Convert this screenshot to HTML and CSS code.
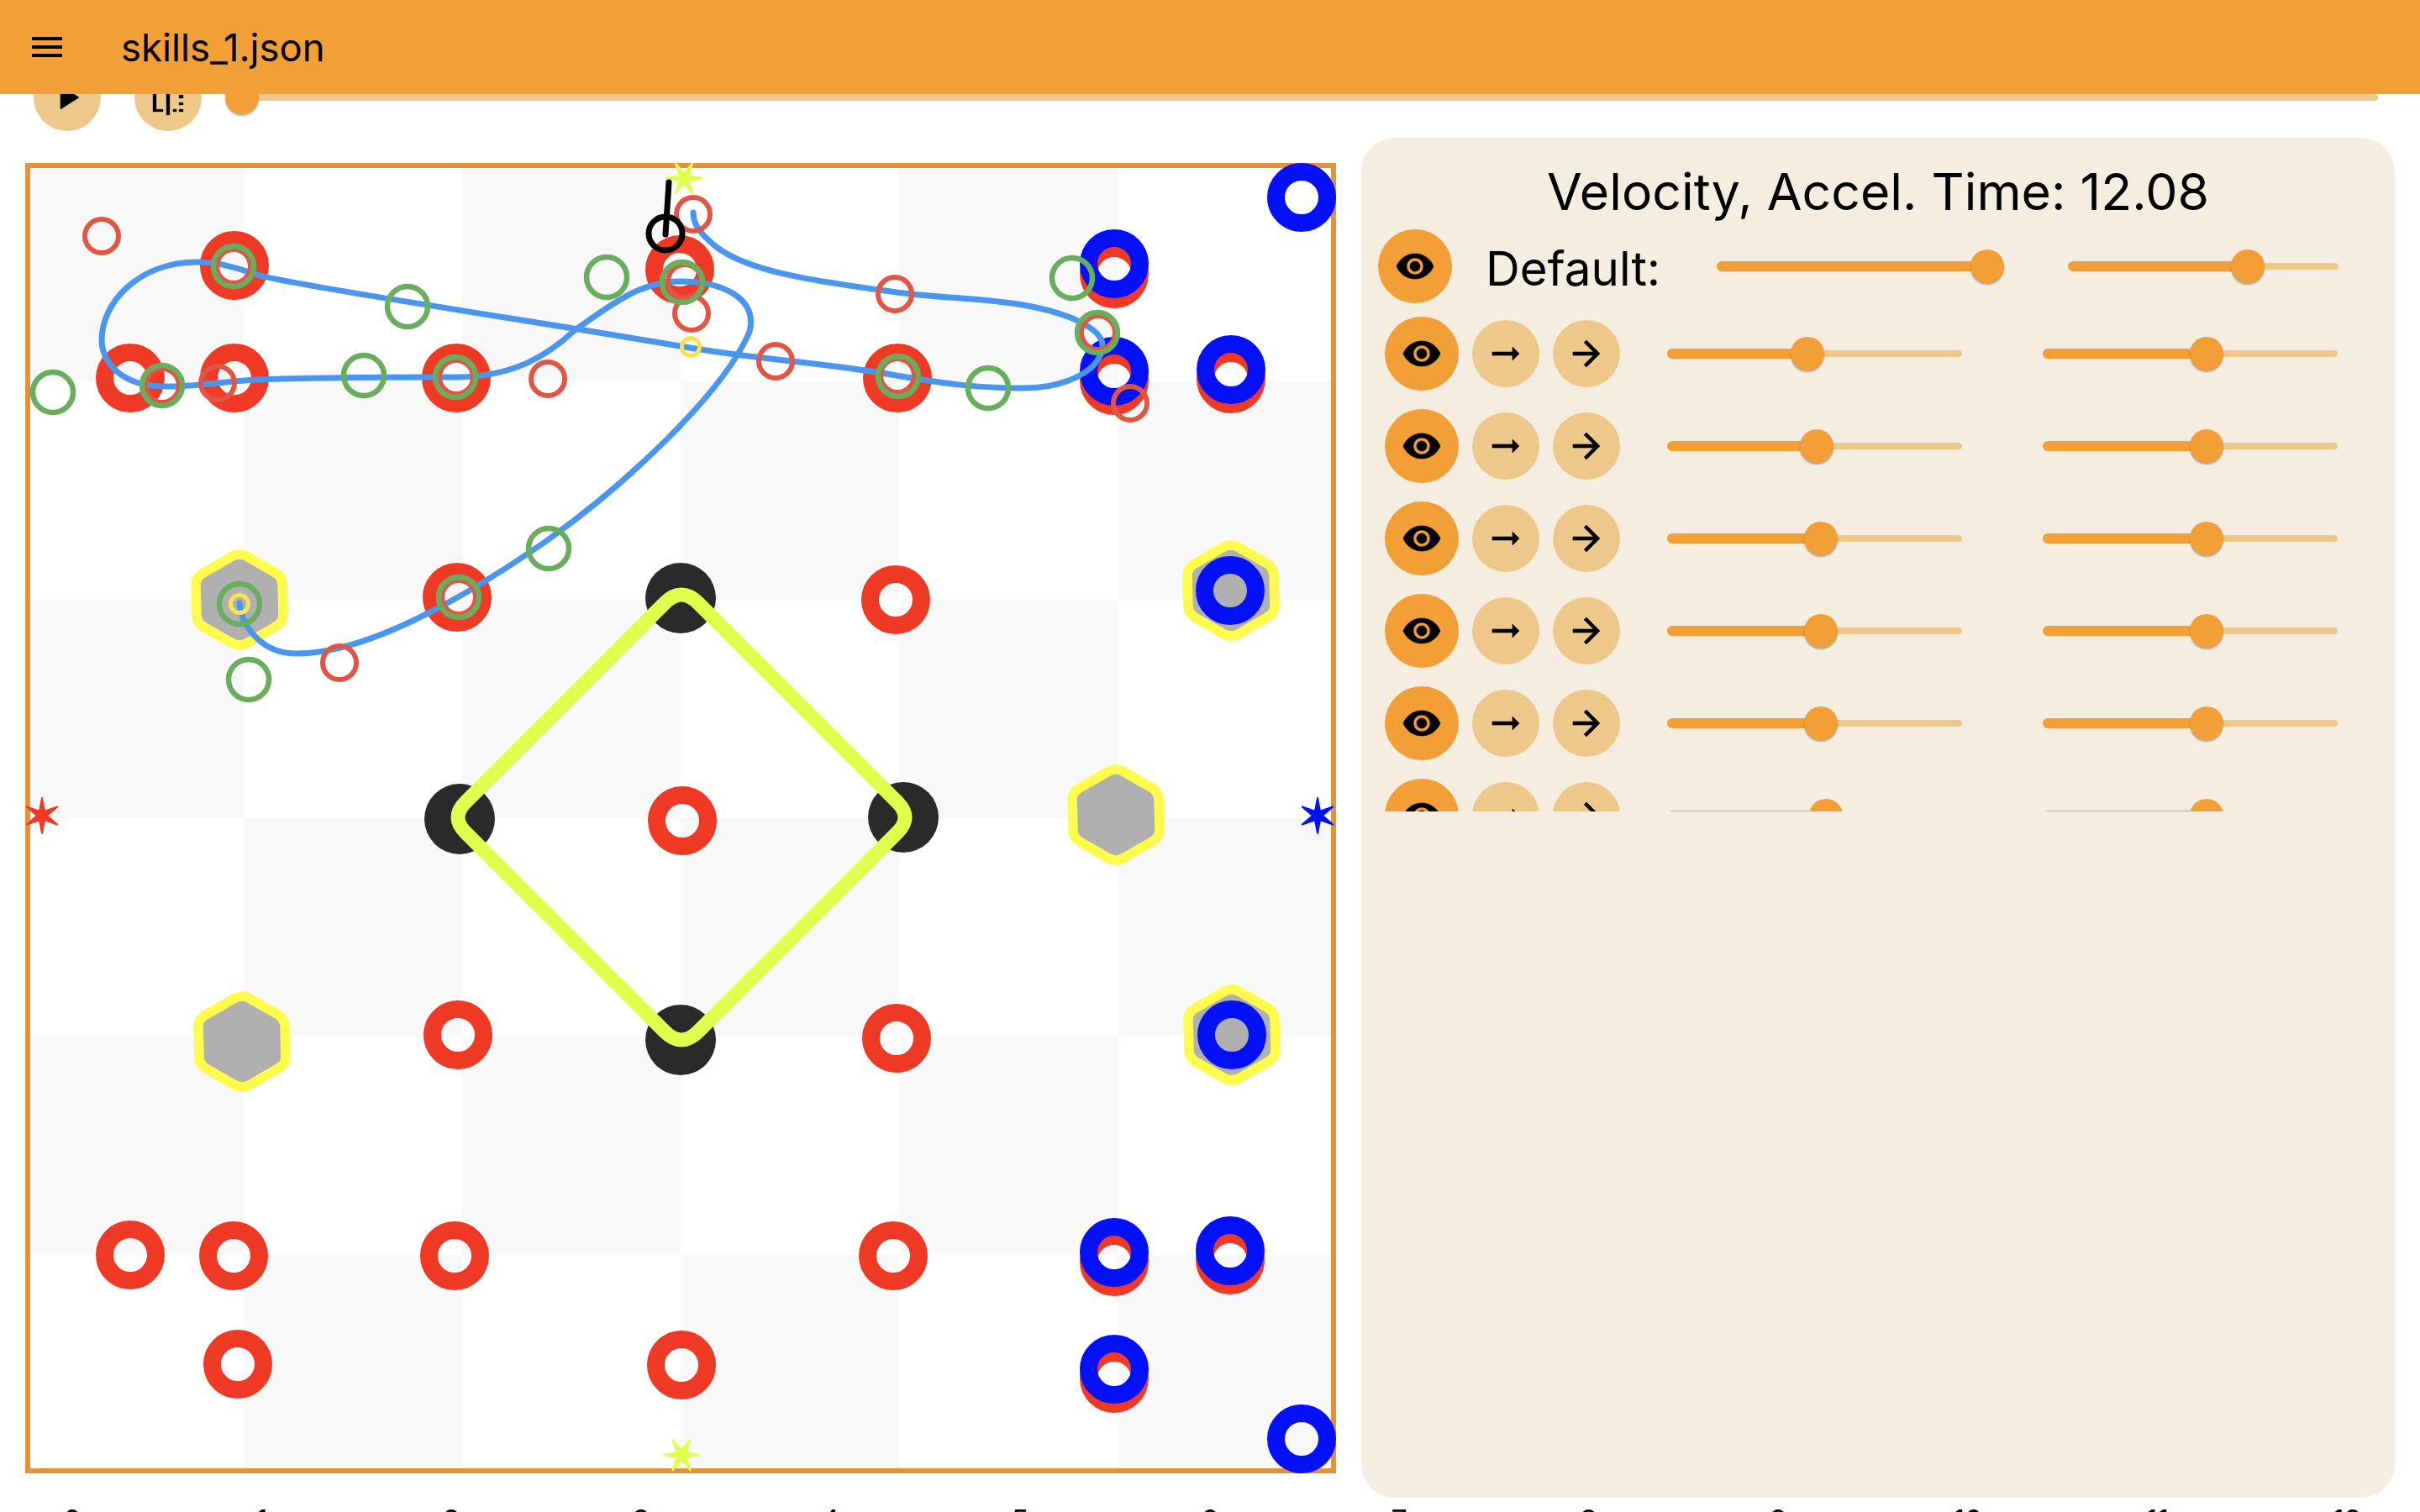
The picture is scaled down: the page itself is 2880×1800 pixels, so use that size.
FILE: index.html
```html
<!DOCTYPE html>
<html lang="en">
<head>
    <meta charset="UTF-8">
    <meta name="viewport" content="width=device-width, initial-scale=1.0">
    <title>skills_1.json</title>

    <link rel="stylesheet" href="styles.css">
</head>
<body>

    <!-- Icon sprite -->
    <svg class="sprite">
        <symbol id="icon-menu" viewBox="0 0 24 24"><path d="M3 18h18v-2H3v2zm0-5h18v-2H3v2zm0-7v2h18V6H3z"/></symbol>
        <symbol id="icon-play" viewBox="0 0 24 24"><path d="M8 5v14l11-7z"/></symbol>
        <symbol id="icon-eye" viewBox="0 0 24 24"><path d="M12 4.5C7 4.5 2.73 7.61 1 12c1.73 4.39 6 7.5 11 7.5s9.27-3.11 11-7.5c-1.73-4.39-6-7.5-11-7.5zM12 17c-2.76 0-5-2.24-5-5s2.24-5 5-5 5 2.24 5 5-2.24 5-5 5zm0-8c-1.66 0-3 1.34-3 3s1.34 3 3 3 3-1.34 3-3-1.34-3-3-3z"/></symbol>
        <symbol id="icon-arrow-alt" viewBox="0 0 24 24"><path d="M16.01 11H4v2h12.01v3L20 12l-3.99-4z"/></symbol>
        <symbol id="icon-arrow" viewBox="0 0 24 24"><path d="M12 4l-1.41 1.41L16.17 11H4v2h12.17l-5.58 5.59L12 20l8-8z"/></symbol>
        <symbol id="icon-split" viewBox="0 0 48 48">
            <path d="M6 0h4v38H6zM6 38h12v3H6zM22 0h4v45h-4zM30 38h4v3h-4zM37 21h5v4h-5zM37 30h5v3h-5zM37 38h5v3h-5z"/>
        </symbol>
    </svg>

    <header class="app-bar">
        <button class="bar-icon"><svg class="icon"><use href="#icon-menu"/></svg></button>
        <span class="file-name">skills_1.json</span>
    </header>

    <div class="toolbar">
        <button class="round light"><svg class="icon"><use href="#icon-play"/></svg></button>
        <button class="round light"><svg class="icon"><use href="#icon-split"/></svg></button>
        <div class="slider timeline">
            <div class="fill" style="width:0%"><span class="thumb"></span></div>
        </div>
    </div>

    <main class="workspace">
        <div class="board">
            <svg class="field" viewBox="30 194 1560 1560">
                <defs>
                    <pattern id="checker" x="30" y="194" width="520" height="520" patternUnits="userSpaceOnUse">
                        <rect width="260" height="260" fill="#f8f8f8"/>
                        <rect x="260" y="260" width="260" height="260" fill="#f8f8f8"/>
                    </pattern>
                    <path id="hex" d="M-10-51Q0-57 10-51L43-32Q51-27 51-18L52 18Q52 27 43 32L10 51Q0 57-10 51L-43 32Q-51 27-51 18L-52-18Q-52-27-43-32Z"/>
                    <path id="star" d="M0-21L3-5.2 18.2-10.5 6 0 18.2 10.5 3 5.2 0 21-3 5.2-18.2 10.5-6 0-18.2-10.5-3-5.2Z"/>
                </defs>

                <rect x="30" y="194" width="1560" height="1560" fill="#fff"/>
                <rect x="30" y="194" width="1560" height="1560" fill="url(#checker)"/>
                <rect class="frame" x="33" y="197" width="1554" height="1554"/>

                <!-- red tokens -->
                <g class="token red">
                    <circle cx="279" cy="316" r="30.5"/>
                    <circle cx="155" cy="450" r="30.5"/>
                    <circle cx="279" cy="450" r="30.5"/>
                    <circle cx="543" cy="450" r="30.5"/>
                    <circle cx="809" cy="321" r="30.5"/>
                    <circle cx="1068" cy="450" r="30.5"/>
                    <circle cx="1326" cy="326" r="30.5"/>
                    <circle cx="1326" cy="453" r="30.5"/>
                    <circle cx="1465" cy="451" r="30.5"/>
                    <circle cx="544" cy="711" r="30.5"/>
                    <circle cx="1066" cy="714" r="30.5"/>
                    <circle cx="812" cy="977" r="30.5"/>
                    <circle cx="545" cy="1232" r="30.5"/>
                    <circle cx="1067" cy="1236" r="30.5"/>
                    <circle cx="155" cy="1494" r="30.5"/>
                    <circle cx="278" cy="1495" r="30.5"/>
                    <circle cx="541" cy="1495" r="30.5"/>
                    <circle cx="1063" cy="1495" r="30.5"/>
                    <circle cx="1326" cy="1502" r="30.5"/>
                    <circle cx="1464" cy="1500" r="30.5"/>
                    <circle cx="283" cy="1624" r="30.5"/>
                    <circle cx="811" cy="1625" r="30.5"/>
                    <circle cx="1326" cy="1641" r="30.5"/>
                </g>

                <!-- hexagons -->
                <g class="hex">
                    <use href="#hex" x="285" y="714"/>
                    <use href="#hex" x="1465" y="703"/>
                    <use href="#hex" x="1328" y="970"/>
                    <use href="#hex" x="288" y="1240"/>
                    <use href="#hex" x="1466" y="1232"/>
                </g>

                <!-- blue tokens -->
                <g class="token blue">
                    <circle cx="1549" cy="235" r="30.5"/>
                    <circle cx="1326" cy="314" r="30.5"/>
                    <circle cx="1326" cy="442" r="30.5"/>
                    <circle cx="1465" cy="440" r="30.5"/>
                    <circle cx="1464" cy="703" r="30.5"/>
                    <circle cx="1466" cy="1232" r="30.5"/>
                    <circle cx="1326" cy="1491" r="30.5"/>
                    <circle cx="1464" cy="1489" r="30.5"/>
                    <circle cx="1326" cy="1630" r="30.5"/>
                    <circle cx="1549" cy="1713" r="30.5"/>
                </g>

                <g class="disc">
                    <circle cx="810" cy="712" r="42"/>
                    <circle cx="547" cy="975" r="42"/>
                    <circle cx="1075" cy="973" r="42"/>
                    <circle cx="810" cy="1238" r="42"/>
                </g>

                <path class="diamond" d="M554 955L791 718Q811 698 831 718L1068 955Q1086 973 1068 991L831 1228Q811 1248 791 1228L554 991Q536 973 554 955Z"/>

                <use class="star-lime" href="#star" transform="translate(814 212) rotate(30)"/>
                <use class="star-lime" href="#star" transform="translate(811 1732) rotate(30)"/>
                <use class="star-red" href="#star" transform="translate(50 971)"/>
                <use class="star-blue" href="#star" transform="translate(1568 971)"/>

                <path class="route" d="M285 718C288 745 310 778 353 778C420 778 520 735 653 642C740 580 860 470 892 395C902 355 860 335 809 335C760 335 725 365 684 393C650 425 610 448 545 449C450 449 360 450 306 452C250 455 200 466 165 456C130 445 121 420 121 405C121 360 165 312 235 312C265 312 290 322 306 327C340 338 645 384 815 413C900 428 985 432 1067 447C1130 458 1170 462 1217 462C1270 462 1312 440 1312 410C1310 390 1270 372 1217 363C1170 355 1120 355 1067 348C980 336 890 325 850 292C830 275 825 265 825 253"/>

                <g class="dot coral">
                    <circle cx="121" cy="281" r="20"/>
                    <circle cx="278" cy="317" r="20"/>
                    <circle cx="193" cy="459" r="20"/>
                    <circle cx="259" cy="456" r="20"/>
                    <circle cx="543" cy="449" r="20"/>
                    <circle cx="652" cy="451" r="20"/>
                    <circle cx="825" cy="255" r="20"/>
                    <circle cx="815" cy="335" r="20"/>
                    <circle cx="823" cy="373" r="20"/>
                    <circle cx="1065" cy="350" r="20"/>
                    <circle cx="1307" cy="396" r="20"/>
                    <circle cx="923" cy="430" r="20"/>
                    <circle cx="1068" cy="447" r="20"/>
                    <circle cx="1345" cy="480" r="20"/>
                    <circle cx="546" cy="711" r="20"/>
                    <circle cx="404" cy="789" r="20"/>
                </g>
                <g class="dot green">
                    <circle cx="63" cy="467" r="24"/>
                    <circle cx="193" cy="459" r="24"/>
                    <circle cx="278" cy="317" r="24"/>
                    <circle cx="485" cy="365" r="24"/>
                    <circle cx="433" cy="447" r="24"/>
                    <circle cx="542" cy="449" r="24"/>
                    <circle cx="722" cy="330" r="24"/>
                    <circle cx="812" cy="336" r="24"/>
                    <circle cx="1276" cy="331" r="24"/>
                    <circle cx="1306" cy="396" r="24"/>
                    <circle cx="1176" cy="462" r="24"/>
                    <circle cx="1069" cy="448" r="24"/>
                    <circle cx="546" cy="711" r="24"/>
                    <circle cx="653" cy="653" r="24"/>
                    <circle cx="296" cy="809" r="24"/>
                    <circle cx="285" cy="719" r="24"/>
                </g>
                <g class="dot gold">
                    <circle cx="285" cy="719" r="10.5"/>
                    <circle cx="822" cy="413" r="10.5"/>
                </g>

                <!-- current pose -->
                <circle class="pose" cx="792" cy="278" r="20"/>
                <line class="pose" x1="796" y1="217" x2="792" y2="279"/>
            </svg>
        </div>

        <section class="panel">
            <h2 class="panel-title">Velocity, Accel. Time: 12.08</h2>

            <div class="default-row">
                <button class="round big"><svg class="icon"><use href="#icon-eye"/></svg></button>
                <span class="default-label">Default:</span>
                <div class="slider short"><div class="fill" style="width:100%"><span class="thumb"></span></div></div>
                <div class="slider short"><div class="fill" style="width:66.5%"><span class="thumb"></span></div></div>
            </div>

            <div class="rows">
                <div class="row">
                    <button class="round big"><svg class="icon"><use href="#icon-eye"/></svg></button>
                    <button class="round light"><svg class="icon"><use href="#icon-arrow-alt"/></svg></button>
                    <button class="round light"><svg class="icon"><use href="#icon-arrow"/></svg></button>
                    <div class="slider wide"><div class="fill" style="width:47.6%"><span class="thumb"></span></div></div>
                    <div class="slider wide"><div class="fill" style="width:55.6%"><span class="thumb"></span></div></div>
                </div>
                <div class="row">
                    <button class="round big"><svg class="icon"><use href="#icon-eye"/></svg></button>
                    <button class="round light"><svg class="icon"><use href="#icon-arrow-alt"/></svg></button>
                    <button class="round light"><svg class="icon"><use href="#icon-arrow"/></svg></button>
                    <div class="slider wide"><div class="fill" style="width:50.7%"><span class="thumb"></span></div></div>
                    <div class="slider wide"><div class="fill" style="width:55.6%"><span class="thumb"></span></div></div>
                </div>
                <div class="row">
                    <button class="round big"><svg class="icon"><use href="#icon-eye"/></svg></button>
                    <button class="round light"><svg class="icon"><use href="#icon-arrow-alt"/></svg></button>
                    <button class="round light"><svg class="icon"><use href="#icon-arrow"/></svg></button>
                    <div class="slider wide"><div class="fill" style="width:52.1%"><span class="thumb"></span></div></div>
                    <div class="slider wide"><div class="fill" style="width:55.6%"><span class="thumb"></span></div></div>
                </div>
                <div class="row">
                    <button class="round big"><svg class="icon"><use href="#icon-eye"/></svg></button>
                    <button class="round light"><svg class="icon"><use href="#icon-arrow-alt"/></svg></button>
                    <button class="round light"><svg class="icon"><use href="#icon-arrow"/></svg></button>
                    <div class="slider wide"><div class="fill" style="width:52.1%"><span class="thumb"></span></div></div>
                    <div class="slider wide"><div class="fill" style="width:55.6%"><span class="thumb"></span></div></div>
                </div>
                <div class="row">
                    <button class="round big"><svg class="icon"><use href="#icon-eye"/></svg></button>
                    <button class="round light"><svg class="icon"><use href="#icon-arrow-alt"/></svg></button>
                    <button class="round light"><svg class="icon"><use href="#icon-arrow"/></svg></button>
                    <div class="slider wide"><div class="fill" style="width:52.1%"><span class="thumb"></span></div></div>
                    <div class="slider wide"><div class="fill" style="width:55.6%"><span class="thumb"></span></div></div>
                </div>
                <div class="row">
                    <button class="round big"><svg class="icon"><use href="#icon-eye"/></svg></button>
                    <button class="round light"><svg class="icon"><use href="#icon-arrow-alt"/></svg></button>
                    <button class="round light"><svg class="icon"><use href="#icon-arrow"/></svg></button>
                    <div class="slider wide"><div class="fill" style="width:53.8%"><span class="thumb"></span></div></div>
                    <div class="slider wide"><div class="fill" style="width:55.6%"><span class="thumb"></span></div></div>
                </div>
            </div>
        </section>
    </main>

    <div class="axis">
        <span>0</span><span>1</span><span>2</span><span>3</span><span>4</span><span>5</span><span>6</span><span>7</span><span>8</span><span>9</span><span>10</span><span>11</span><span>12</span>
    </div>

</body>
</html>
```

FILE: styles.css
```css
html, body {
    margin: 0;
    height: 1800px;
    overflow: hidden;
}
body {
    background-color: #fff;
    color: #000;
    font-family: Inter, Roboto, sans-serif;
    position: relative;
}
.sprite {
    display: none;
}
.icon {
    display: block;
    width: 48px;
    height: 48px;
}

/* Top bar lies over the toolbar */
.app-bar {
    position: absolute;
    top: 0;
    left: 0;
    right: 0;
    height: 112px;
    z-index: 2;
    display: flex;
    align-items: center;
    padding-left: 32px;
    background-color: #f29f38;
}
.bar-icon {
    padding: 0;
    border: none;
    background: none;
}
.file-name {
    margin-left: 64px;
    font-size: 45.5px;
}

/* Toolbar */
.toolbar {
    display: flex;
    align-items: center;
    gap: 40px;
    height: 80px;
    padding: 76px 50px 0 40px;
}
.round {
    display: flex;
    align-items: center;
    justify-content: center;
    flex: none;
    padding: 0;
    border: none;
    border-radius: 50%;
}
.round .icon {
    stroke: #000;
    stroke-width: 0.3px;
}
.light {
    width: 80px;
    height: 80px;
    background-color: #edc88a;
}
.big {
    width: 88px;
    height: 88px;
    background-color: #f29f38;
}

/* Sliders */
.slider {
    position: relative;
    height: 8px;
    border-radius: 4px;
    background-color: #edc88a;
}
.fill {
    position: relative;
    top: -2px;
    height: 12px;
    border-radius: 6px;
    background-color: #f29f38;
}
.thumb {
    position: absolute;
    top: -14px;
    right: -20px;
    width: 40px;
    height: 40px;
    border-radius: 50%;
    background-color: #f29f38;
    box-shadow: 0 2px 2px rgba(0, 0, 0, 0.3);
}
.timeline {
    flex: 1;
    margin-left: 8px;
}
.short {
    flex: none;
    width: 322px;
}
.wide {
    flex: none;
    width: 351px;
}

/* Main area */
.workspace {
    display: flex;
    gap: 30px;
    margin-top: 8px;
    padding-left: 30px;
}
.board {
    flex: none;
    width: 1560px;
    height: 1560px;
    margin-top: 30px;
}
.field {
    display: block;
    width: 1560px;
    height: 1560px;
}
.frame {
    fill: none;
    stroke: #e09339;
    stroke-width: 6;
}
.token {
    fill: none;
    stroke-width: 21;
}
.token.red {
    stroke: #ee3a24;
}
.token.blue {
    stroke: #0410f6;
}
.hex {
    fill: #b0b0b0;
    stroke: #fffb4d;
    stroke-width: 11.5;
}
.disc {
    fill: #2a2a2a;
}
.diamond {
    fill: none;
    stroke: #e2ff4d;
    stroke-width: 17;
}
.star-lime, .star-red, .star-blue {
    stroke-width: 2;
    stroke-linejoin: round;
}
.star-lime {
    fill: #e2ff4d;
    stroke: #e2ff4d;
}
.star-red {
    fill: #ee3a24;
    stroke: #ee3a24;
}
.star-blue {
    fill: #0410f6;
    stroke: #0410f6;
}
.route {
    fill: none;
    stroke: #4a96ee;
    stroke-width: 7;
    stroke-linecap: round;
}
.dot {
    fill: none;
}
.dot.coral {
    stroke: #e15544;
    stroke-width: 6;
}
.dot.green {
    stroke: #68ae5c;
    stroke-width: 6.5;
}
.dot.gold {
    stroke: #fce24e;
    stroke-width: 5;
}
.pose {
    fill: none;
    stroke: #000;
    stroke-width: 7;
    stroke-linecap: round;
}

/* Right panel */
.panel {
    flex: none;
    width: 1230px;
    height: 1619px;
    border-radius: 40px;
    background-color: #f5ede0;
}
.panel-title {
    height: 108px;
    margin: 0;
    font-size: 60.7px;
    font-weight: 400;
    line-height: 128px;
    text-align: center;
}
.default-row {
    display: flex;
    align-items: center;
    height: 90px;
    margin-bottom: 4px;
    padding-left: 20px;
}
.default-label {
    flex: none;
    width: 275px;
    margin-left: 40px;
    padding-top: 4px;
    font-size: 56.5px;
}
.default-row .slider + .slider {
    margin-left: 96px;
}
.rows {
    height: 600px;
    overflow: hidden;
}
.row {
    display: flex;
    align-items: center;
    gap: 16px;
    height: 110px;
    padding-left: 28px;
}
.row .wide {
    margin-left: 40px;
}
.row .wide + .wide {
    margin-left: 80px;
}

/* Cut-off axis under the page */
.axis {
    display: flex;
    justify-content: space-between;
    margin-top: 6px;
    padding: 0 87px 0 86px;
    font-size: 34px;
}
.axis span {
    display: flex;
    justify-content: center;
    width: 0;
}
```
